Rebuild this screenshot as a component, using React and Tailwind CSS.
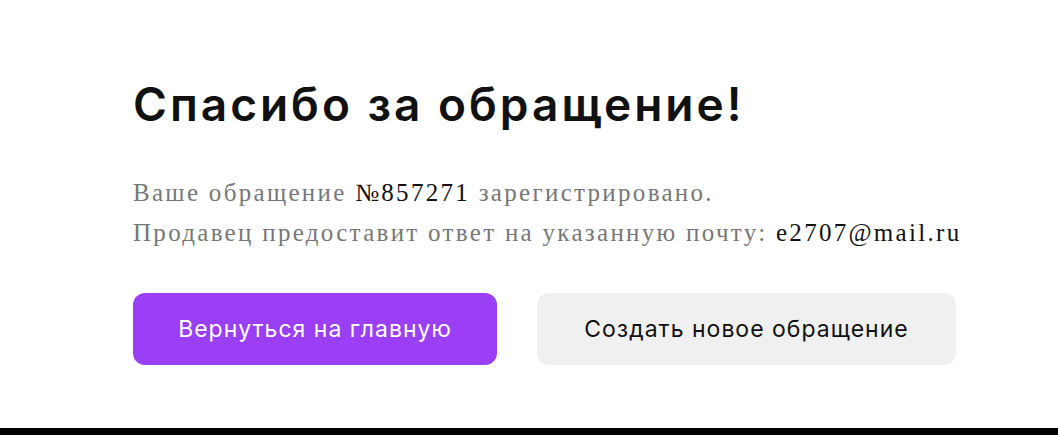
import React from "react";

const ThankYou = () => {
	return (
		<section className="w-[1058px] h-[435px] bg-white flex flex-col">
			<div className="flex-1 pl-[133px] pt-[81px]">
				<h1 className="font-['Inter',sans-serif] font-semibold text-[46px] leading-[46px] tracking-[3px] text-[#111]">
					Спасибо за обращение!
				</h1>

				<div className="mt-[46px] font-['Liberation_Serif',serif] text-[25px] leading-[40px] tracking-[2.3px] text-[#777]">
					<p>
						Ваше обращение <span className="text-[#111]">№857271</span> зарегистрировано.
					</p>
					<p>
						Продавец предоставит ответ на указанную почту: <span className="text-[#111]">e2707@mail.ru</span>
					</p>
				</div>

				<div className="mt-[40px] flex gap-[40px] font-['Inter',sans-serif] text-[23px] tracking-[1px]">
					<button
						type="button"
						className="w-[364px] h-[72px] rounded-[12px] bg-[#9b3ff7] text-white"
					>
						Вернуться на главную
					</button>
					<button
						type="button"
						className="w-[419px] h-[72px] rounded-[12px] bg-[#f0f0f0] text-[#111]"
					>
						Создать новое обращение
					</button>
				</div>
			</div>
			<div className="h-[7px] bg-black" />
		</section>
	);
};

export default function App() {
	return <ThankYou />;
}
